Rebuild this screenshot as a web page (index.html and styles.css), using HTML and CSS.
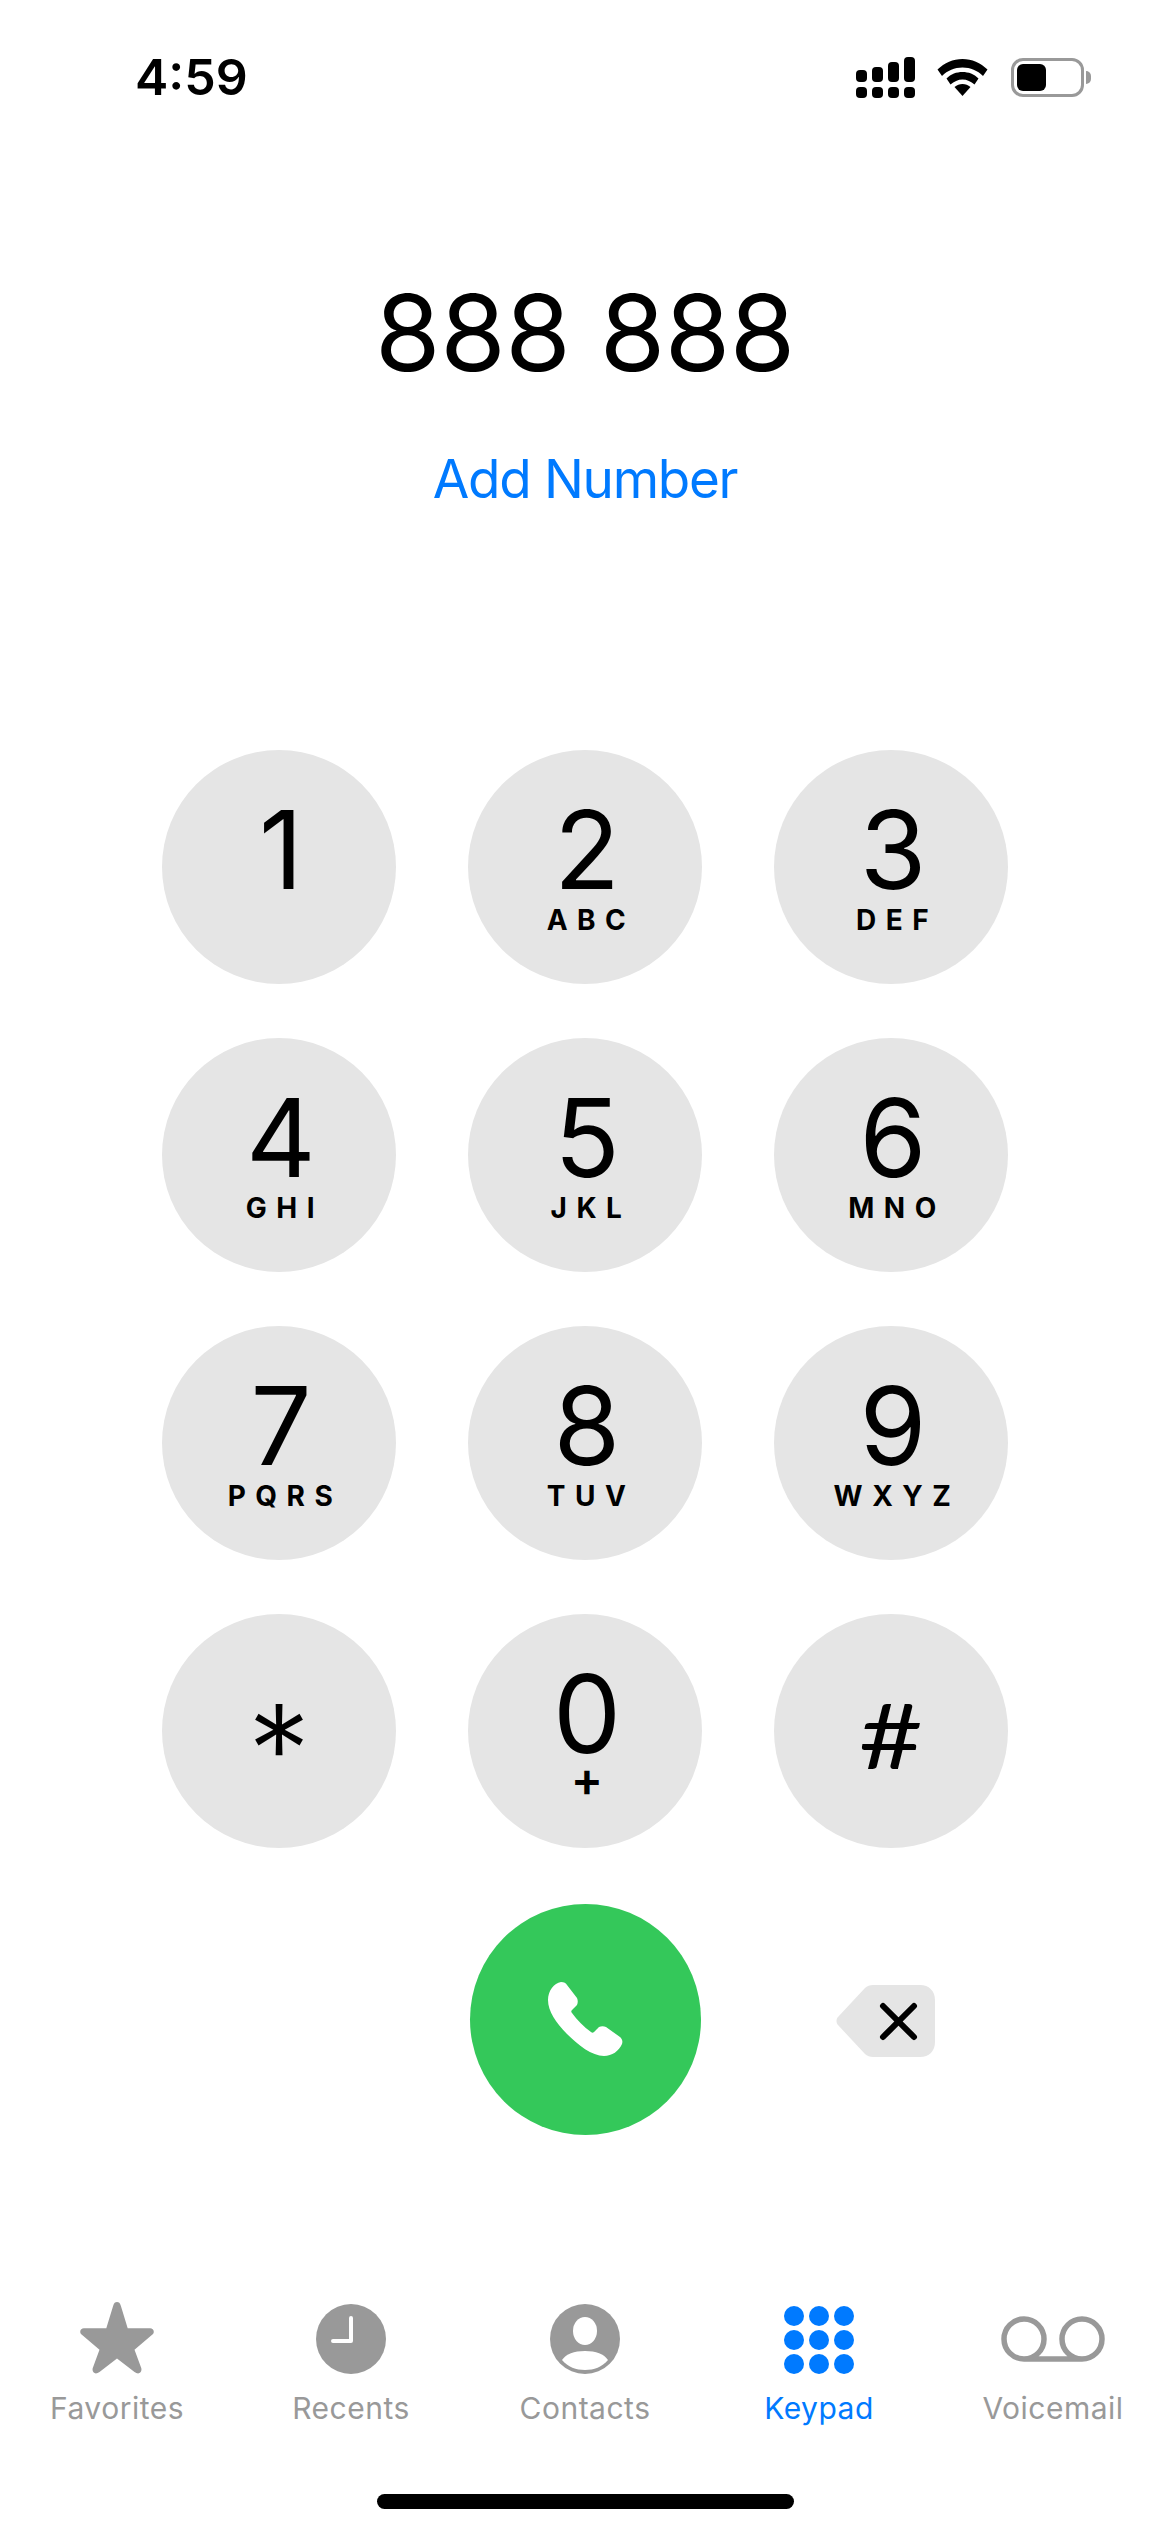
FILE: index.html
```html
<!DOCTYPE html>
<html>
<head>
<meta charset="UTF-8">
<title>Keypad</title>
<link rel="stylesheet" href="styles.css">
</head>
<body>
<div class="phone">
	<!-- status bar -->
	<div class="status">
		<div class="time">4:59</div>
		<div class="status-icons">
			<svg class="signal" width="60" height="41" viewBox="0 0 60 41">
				<rect x="0" y="13" width="11" height="12" rx="4"/>
				<rect x="16" y="10" width="11" height="15" rx="4"/>
				<rect x="32" y="5" width="11" height="20" rx="4"/>
				<rect x="48" y="0" width="11" height="25" rx="4"/>
				<rect x="0" y="30" width="11" height="11" rx="4"/>
				<rect x="16" y="30" width="11" height="11" rx="4"/>
				<rect x="32" y="30" width="11" height="11" rx="4"/>
				<rect x="48" y="30" width="11" height="11" rx="4"/>
			</svg>
			<svg class="wifi" width="51" height="37" viewBox="0 0 51 37">
				<path d="M25.500 0C16 0 7.500 4 0.500 10.500L5 17C10.500 11.500 17.500 8.500 25.500 8.500C33.500 8.500 40.500 11.500 46 17L50.500 10.500C43.500 4 35 0 25.500 0Z"/>
				<path d="M25.500 13C19.500 13 14 15 9.500 19.500L13.500 25.500C17 22.500 21 20.500 25.500 20.500C30 20.500 34 22.500 37.500 25.500L41.500 19.500C37 15 31.500 13 25.500 13Z"/>
				<path d="M25.500 25C22.500 25 20 26 17.500 28L25.500 37L33.500 28C31 26 28.500 25 25.500 25Z"/>
			</svg>
			<div class="battery">
				<div class="battery-body"><div class="battery-fill"></div></div>
				<div class="battery-nub"></div>
			</div>
		</div>
	</div>

	<!-- number -->
	<div class="number">888 888</div>
	<div class="add-number">Add Number</div>

	<!-- keypad -->
	<div class="keys">
		<div class="key"><span class="digit">1</span></div>
		<div class="key"><span class="digit">2</span><span class="letters">ABC</span></div>
		<div class="key"><span class="digit">3</span><span class="letters">DEF</span></div>
		<div class="key"><span class="digit">4</span><span class="letters">GHI</span></div>
		<div class="key"><span class="digit">5</span><span class="letters">JKL</span></div>
		<div class="key"><span class="digit">6</span><span class="letters">MNO</span></div>
		<div class="key"><span class="digit">7</span><span class="letters">PQRS</span></div>
		<div class="key"><span class="digit">8</span><span class="letters">TUV</span></div>
		<div class="key"><span class="digit">9</span><span class="letters">WXYZ</span></div>
		<div class="key"><span class="asterisk">*</span></div>
		<div class="key"><span class="digit">0</span><span class="plus">+</span></div>
		<div class="key"><span class="hash">#</span></div>
		<div class="call-cell">
			<div class="call">
				<svg width="75" height="75" viewBox="0 0 75 75">
					<path fill="#fff" d="M13 0C16 0 18 1 19 3L29 16C30 18 30 21 29 23L24 28C23 29 23 30 24 31C29 38 36 45 43 50C44 51 45 51 46 50L51 45C53 44 56 44 58 45L72 55C74 57 75 59 74 62C71 69 64 74 56 74C44 74 30 63 19 52C8 41 0 29 0 18C0 9 6 1 13 0Z"/>
				</svg>
			</div>
		</div>
		<div class="del-cell">
			<svg width="100" height="72" viewBox="0 0 100 72">
				<path fill="#e5e5e5" d="M29 3C31 1 34 0 37 0H84C93 0 99 6 99 15V57C99 66 93 72 84 72H37C34 72 31 71 29 69L2 40C0 38 0 34 2 32Z"/>
				<path d="M47 21L78 52M78 21L47 52" stroke="#000" stroke-width="6" stroke-linecap="round"/>
			</svg>
		</div>
	</div>

	<!-- tab bar -->
	<div class="tabs">
		<div class="tab">
			<svg width="76" height="74" viewBox="0 0 76 74">
				<path fill="#999" d="M38 0C40 0 41 1 42 4L49 27H72C75 27 77 30 75 33L56 49L63 68C64 73 60 75 56 72L38 58L20 72C16 75 12 73 13 68L20 49L1 33C-1 30 1 27 4 27H27L34 4C35 1 36 0 38 0Z"/>
			</svg>
			<span>Favorites</span>
		</div>
		<div class="tab">
			<svg width="70" height="70" viewBox="0 0 70 70">
				<circle cx="35" cy="35" r="35" fill="#999"/>
				<path d="M35 14V37H17" fill="none" stroke="#fff" stroke-width="4" stroke-linecap="round" stroke-linejoin="round"/>
			</svg>
			<span>Recents</span>
		</div>
		<div class="tab">
			<svg width="70" height="70" viewBox="0 0 70 70">
				<circle cx="35" cy="35" r="35" fill="#999"/>
				<ellipse cx="35" cy="27" rx="12" ry="14" fill="#fff"/>
				<path fill="#fff" d="M35 47C24 47 16 50 12 56C18 63 26 66 35 66C44 66 52 63 58 56C54 50 46 47 35 47Z"/>
			</svg>
			<span>Contacts</span>
		</div>
		<div class="tab active">
			<div class="dots">
				<i></i><i></i><i></i><i></i><i></i><i></i><i></i><i></i><i></i>
			</div>
			<span>Keypad</span>
		</div>
		<div class="tab">
			<svg class="voicemail" width="104" height="46" viewBox="0 0 104 46">
				<path fill="none" stroke="#999" stroke-width="5.500" d="M23 43H81M23 43A20 20 0 1 1 23 3A20 20 0 1 1 23 43ZM81 43A20 20 0 1 1 81 3A20 20 0 1 1 81 43Z"/>
			</svg>
			<span>Voicemail</span>
		</div>
	</div>

	<div class="home-bar"></div>
</div>
</body>
</html>
```

FILE: styles.css
```css
html, body
{
	margin: 0;
	padding: 0;
	background: #fff;
}
.phone
{
	width: 1170px;
	height: 2532px;
	display: flex;
	flex-direction: column;
	align-items: center;
	font-family: Inter, "Liberation Sans", sans-serif;
	color: #000;
	overflow: hidden;
}

/* status bar */
.status
{
	width: 1170px;
	height: 41px;
	margin-top: 57px;
	display: flex;
	justify-content: space-between;
	align-items: center;
	box-sizing: border-box;
	padding: 0 79px 0 135px;
}
.time
{
	font-size: 50px;
	font-weight: 600;
	line-height: 41px;
}
.status-icons
{
	display: flex;
	align-items: center;
	gap: 21px;
}
.signal, .wifi
{
	display: block;
	flex: none;
}
.battery
{
	display: flex;
	align-items: center;
	margin-left: 2px;
}
.battery-body
{
	width: 73px;
	height: 39px;
	box-sizing: border-box;
	border: 3px solid #999;
	border-radius: 12px;
	padding: 3px;
}
.battery-fill
{
	width: 29px;
	height: 100%;
	background: #000;
	border-radius: 6px;
}
.battery-nub
{
	width: 5px;
	height: 13px;
	margin-left: 2px;
	background: #999;
	border-radius: 0 5px 5px 0;
}

/* number */
.number
{
	margin-top: 175px;
	font-size: 106px;
	font-weight: 380;
	line-height: 120px;
	height: 120px;
	letter-spacing: -0.5px;
}
.add-number
{
	margin-top: 54px;
	font-size: 53px;
	line-height: 64px;
	letter-spacing: -1.3px;
	color: #007aff;
}

/* keypad */
.keys
{
	margin-top: 239px;
	display: grid;
	grid-template-columns: repeat(3, 234px);
	grid-auto-rows: 234px;
	column-gap: 72px;
	row-gap: 54px;
}
.key
{
	background: #e5e5e5;
	border-radius: 50%;
	display: flex;
	flex-direction: column;
	align-items: center;
	padding-top: 45px;
	box-sizing: border-box;
}
.digit
{
	font-size: 108px;
	font-weight: 380;
	line-height: 110px;
	height: 110px;
	margin-left: 4px;
}
.letters
{
	font-size: 28px;
	font-weight: 700;
	line-height: 30px;
	letter-spacing: 9.500px;
	margin-right: -12px;
}
.plus
{
	font-size: 48px;
	font-weight: 600;
	line-height: 30px;
	margin-left: 4px;
	margin-top: -5px;
}
.asterisk
{
	font-size: 125px;
	font-weight: 300;
	line-height: 110px;
	margin-top: 36px;
}
.hash
{
	font-family: Lato, "Liberation Sans", sans-serif;
	font-size: 92px;
	line-height: 110px;
	margin-top: 20px;
	transform: scaleX(1.2);
}
.call-cell
{
	grid-column: 2;
	display: flex;
	align-items: center;
	justify-content: center;
}
.call
{
	width: 231px;
	height: 231px;
	border-radius: 50%;
	background: #34c85a;
	display: flex;
	align-items: center;
	justify-content: center;
}
.del-cell
{
	display: flex;
	align-items: center;
	justify-content: center;
	padding-right: 11px;
	padding-top: 3px;
}

/* tab bar */
.tabs
{
	width: 1170px;
	margin-top: 166px;
	display: grid;
	grid-template-columns: repeat(5, 234px);
}
.tab
{
	height: 124px;
	display: flex;
	flex-direction: column;
	align-items: center;
	justify-content: flex-end;
	color: #999;
	font-size: 30px;
	line-height: 36px;
	letter-spacing: 0.5px;
}
.tab svg, .dots
{
	margin-bottom: 16px;
}
.tab .voicemail
{
	margin-bottom: 28px;
}
.tab.active
{
	color: #007aff;
}
.dots
{
	display: grid;
	grid-template-columns: repeat(3, 20px);
	grid-auto-rows: 20px;
	column-gap: 5px;
	row-gap: 4px;
}
.dots i
{
	background: #007aff;
	border-radius: 50%;
}
.home-bar
{
	width: 417px;
	height: 15px;
	margin-top: 68px;
	background: #000;
	border-radius: 8px;
}
```
